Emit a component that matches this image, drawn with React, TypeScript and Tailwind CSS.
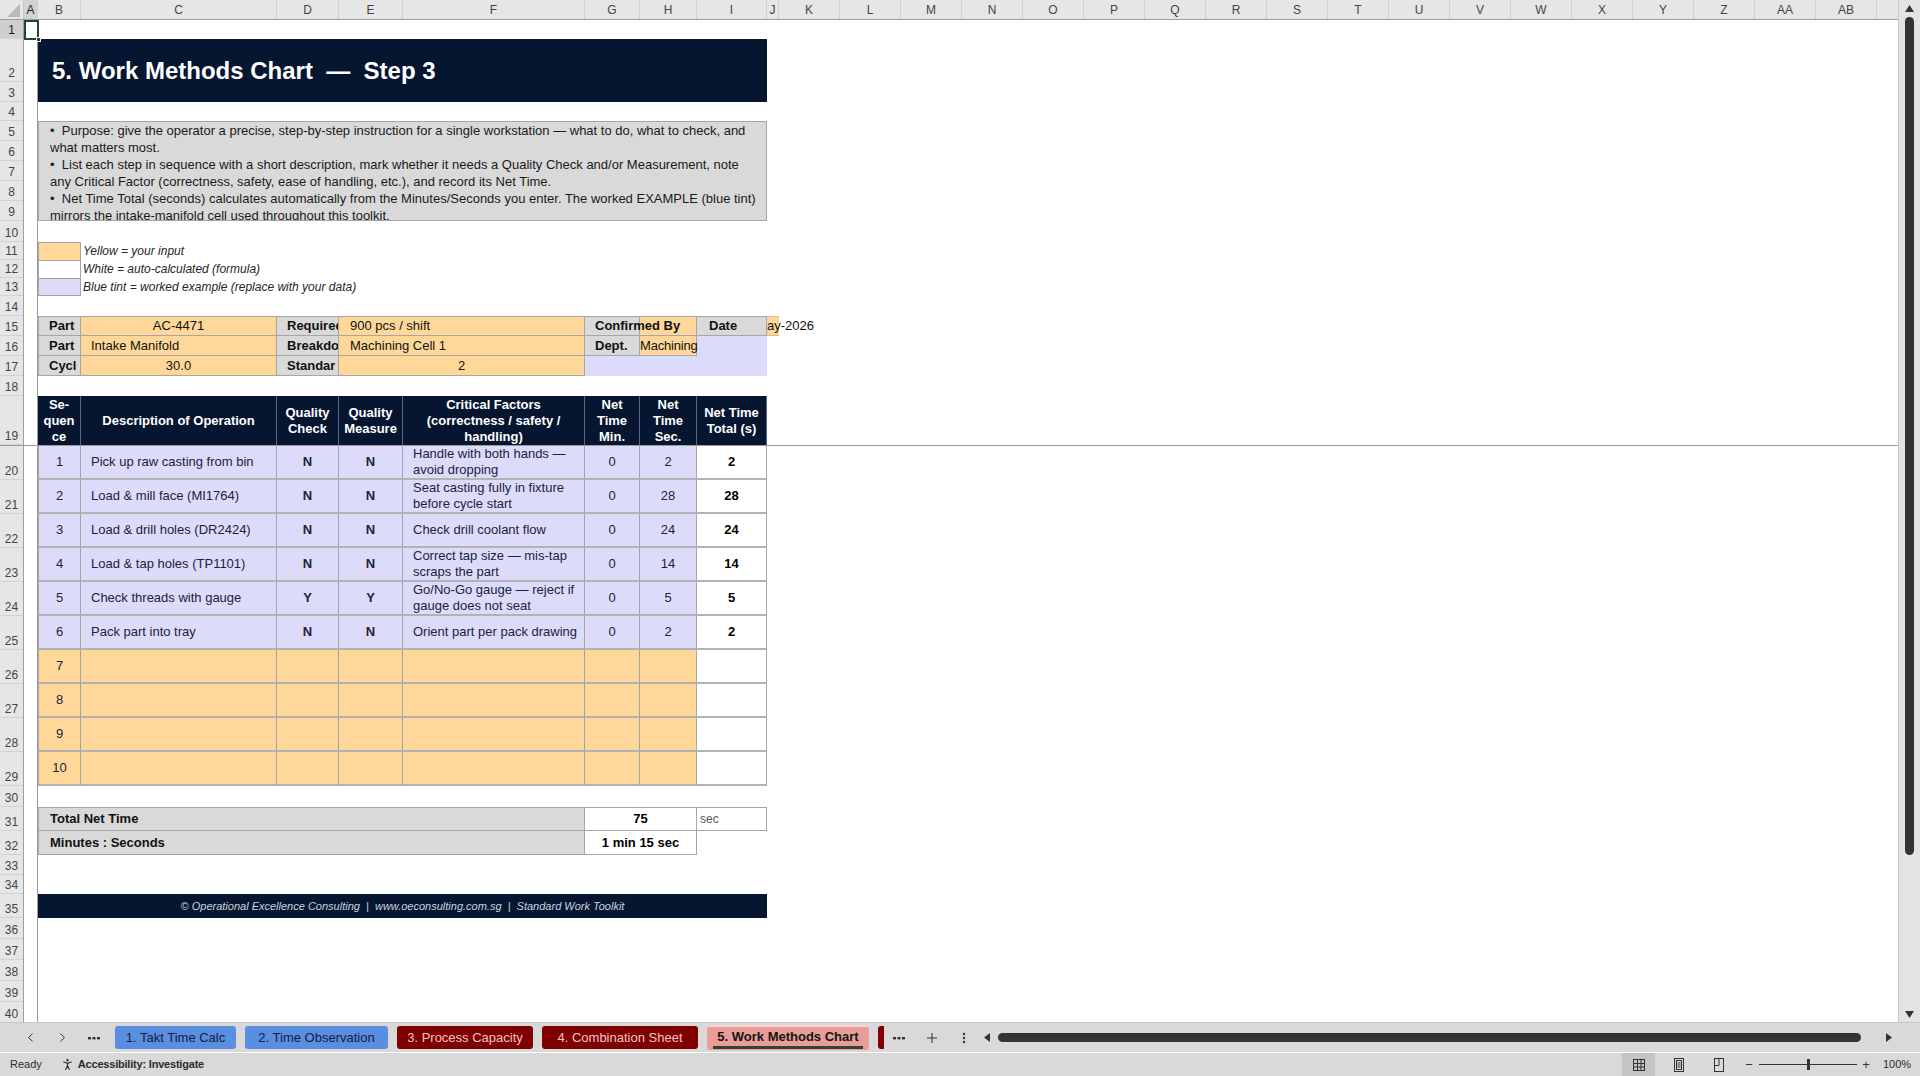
import { ChevronLeft, ChevronRight, Plus, PersonStanding } from "lucide-react";

type Step = {
  seq: number;
  desc: string;
  qc: string;
  qm: string;
  crit: string[];
  min: number;
  sec: number;
};

// worked example (blue tint rows)
const STEPS: Step[] = [
  { seq: 1, desc: "Pick up raw casting from bin", qc: "N", qm: "N", crit: ["Handle with both hands —", "avoid dropping"], min: 0, sec: 2 },
  { seq: 2, desc: "Load & mill face (MI1764)", qc: "N", qm: "N", crit: ["Seat casting fully in fixture", "before cycle start"], min: 0, sec: 28 },
  { seq: 3, desc: "Load & drill holes (DR2424)", qc: "N", qm: "N", crit: ["Check drill coolant flow"], min: 0, sec: 24 },
  { seq: 4, desc: "Load & tap holes (TP1101)", qc: "N", qm: "N", crit: ["Correct tap size — mis-tap", "scraps the part"], min: 0, sec: 14 },
  { seq: 5, desc: "Check threads with gauge", qc: "Y", qm: "Y", crit: ["Go/No-Go gauge — reject if", "gauge does not seat"], min: 0, sec: 5 },
  { seq: 6, desc: "Pack part into tray", qc: "N", qm: "N", crit: ["Orient part per pack drawing"], min: 0, sec: 2 },
];

const NOTES = [
  "•  Purpose: give the operator a precise, step-by-step instruction for a single workstation — what to do, what to check, and",
  "what matters most.",
  "•  List each step in sequence with a short description, mark whether it needs a Quality Check and/or Measurement, note",
  "any Critical Factor (correctness, safety, ease of handling, etc.), and record its Net Time.",
  "•  Net Time Total (seconds) calculates automatically from the Minutes/Seconds you enter. The worked EXAMPLE (blue tint)",
  "mirrors the intake-manifold cell used throughout this toolkit.",
];

const LEGEND = [
  { fill: "bg-[#ffd899]", text: "Yellow = your input", edge: "" },
  { fill: "bg-white", text: "White = auto-calculated (formula)", edge: "" },
  { fill: "bg-[#dcdcfa]", text: "Blue tint = worked example (replace with your data)", edge: "border-b" },
];

const COLUMNS = [
  { label: "A", w: "w-[14px]" },
  { label: "B", w: "w-[43px]" },
  { label: "C", w: "w-[196px]" },
  { label: "D", w: "w-[62px]" },
  { label: "E", w: "w-[64px]" },
  { label: "F", w: "w-[182px]" },
  { label: "G", w: "w-[55px]" },
  { label: "H", w: "w-[57px]" },
  { label: "I", w: "w-[70px]" },
  { label: "J", w: "w-[12px]" },
  ...["K", "L", "M", "N", "O", "P", "Q", "R", "S", "T", "U", "V", "W", "X", "Y", "Z", "AA", "AB"].map((label) => ({
    label,
    w: "w-[61px]",
  })),
];

type RowDef = { n: number; h: string };

const TOP_ROWS: RowDef[] = [
  { n: 1, h: "h-[19px]" },
  { n: 2, h: "h-[43px]" },
  { n: 3, h: "h-[20px]" },
  { n: 4, h: "h-[19px]" },
  { n: 5, h: "h-[20px]" },
  { n: 6, h: "h-[20px]" },
  { n: 7, h: "h-[20px]" },
  { n: 8, h: "h-[20px]" },
  { n: 9, h: "h-[20px]" },
  { n: 10, h: "h-[21px]" },
  { n: 11, h: "h-[18px]" },
  { n: 12, h: "h-[18px]" },
  { n: 13, h: "h-[18px]" },
  { n: 14, h: "h-[20px]" },
  { n: 15, h: "h-[20px]" },
  { n: 16, h: "h-[20px]" },
  { n: 17, h: "h-[20px]" },
  { n: 18, h: "h-[20px]" },
  { n: 19, h: "h-[49px]" },
];

const BOTTOM_ROWS: RowDef[] = [
  ...[20, 21, 22, 23, 24, 25, 26, 27, 28, 29].map((n) => ({ n, h: "h-[34px]" })),
  { n: 30, h: "h-[21px]" },
  { n: 31, h: "h-[24px]" },
  { n: 32, h: "h-[24px]" },
  { n: 33, h: "h-[20px]" },
  { n: 34, h: "h-[19px]" },
  { n: 35, h: "h-[24px]" },
  { n: 36, h: "h-[21px]" },
  { n: 37, h: "h-[21px]" },
  { n: 38, h: "h-[21px]" },
  { n: 39, h: "h-[21px]" },
  { n: 40, h: "h-[21px]" },
];

const HEADS = [
  { w: "w-[43px]", lines: ["Se-", "quen", "ce"] },
  { w: "w-[196px]", lines: ["Description of Operation"] },
  { w: "w-[62px]", lines: ["Quality", "Check"] },
  { w: "w-[64px]", lines: ["Quality", "Measure"] },
  { w: "w-[182px]", lines: ["Critical Factors", "(correctness / safety /", "handling)"] },
  { w: "w-[55px]", lines: ["Net", "Time", "Min."] },
  { w: "w-[57px]", lines: ["Net", "Time", "Sec."] },
  { w: "w-[70px]", lines: ["Net Time", "Total (s)"] },
];

function RowLabels({ rows }: { rows: RowDef[] }) {
  return (
    <div className="flex w-[24px] shrink-0 flex-col border-r border-[#9e9e9e] bg-[#e6e6e6]">
      {rows.map((r) => (
        <div
          key={r.n}
          className={`${r.h} flex shrink-0 items-end justify-center border-b border-[#d2d2d2] pb-px text-[12px] leading-[14px] ${
            r.n === 1 ? "bg-[#cfcfcf] text-[#1e1e1e]" : "text-[#444]"
          }`}
        >
          {r.n}
        </div>
      ))}
    </div>
  );
}

function Pane({ rows, selected, grow, children }: { rows: RowDef[]; selected?: boolean; grow?: boolean; children: React.ReactNode }) {
  return (
    <div className={`flex overflow-hidden ${grow ? "min-h-0 flex-1" : "shrink-0"}`}>
      <RowLabels rows={rows} />
      {/* frozen column A */}
      <div className="relative w-[14px] shrink-0 border-r border-[#9b9b9b]">
        {selected && (
          <div className="absolute left-0 top-0 h-[20px] w-[15px] border-2 border-[#1d4a2c]">
            <div className="absolute -bottom-[4px] -right-[4px] h-[5px] w-[5px] border border-white bg-[#1d4a2c]" />
          </div>
        )}
      </div>
      <div className="flex min-w-0 flex-1 flex-col">{children}</div>
    </div>
  );
}

function ColumnHeader() {
  return (
    <div className="flex h-[20px] shrink-0 border-b border-[#9e9e9e] bg-[#e6e6e6] text-[12px] text-[#444]">
      <div className="flex w-[24px] shrink-0 items-end justify-end border-r border-[#c8c8c8] pb-[2px] pr-[3px]">
        <svg width="13" height="13" viewBox="0 0 13 13">
          <polygon points="13,0 13,13 0,13" fill="#b9b9b9" />
        </svg>
      </div>
      {COLUMNS.map((c) => (
        <div
          key={c.label}
          className={`${c.w} flex shrink-0 items-center justify-center border-r border-[#d0d0d0] ${
            c.label === "A" ? "bg-[#d2d2d2] text-[#1e1e1e]" : ""
          }`}
        >
          {c.label}
        </div>
      ))}
      <div className="flex-1" />
    </div>
  );
}

function StepRow({ n, step }: { n: number; step?: Step }) {
  const fill = step ? "bg-[#dcdcfa]" : "bg-[#ffd899]";
  const cell = `flex shrink-0 items-center border-r border-b-2 border-r-[#a6a6a6] border-b-[#b3b3b3] ${fill}`;
  return (
    <div className="flex h-[34px] shrink-0 text-[13px] text-[#1a2240]">
      <div className={`${cell} w-[43px] justify-center border-l border-l-[#a6a6a6]`}>{n}</div>
      <div className={`${cell} w-[196px] whitespace-nowrap pl-[10px]`}>{step?.desc}</div>
      <div className={`${cell} w-[62px] justify-center font-bold`}>{step?.qc}</div>
      <div className={`${cell} w-[64px] justify-center font-bold`}>{step?.qm}</div>
      <div className={`${cell} w-[182px] pl-[10px]`}>
        <div className="whitespace-nowrap leading-[16px]">
          {step?.crit.map((line) => (
            <div key={line}>{line}</div>
          ))}
        </div>
      </div>
      <div className={`${cell} w-[55px] justify-center`}>{step?.min}</div>
      <div className={`${cell} w-[57px] justify-center`}>{step?.sec}</div>
      <div className="flex w-[70px] shrink-0 items-center justify-center border-r border-b-2 border-r-[#a6a6a6] border-b-[#b3b3b3] bg-white font-bold text-black">
        {step ? step.min * 60 + step.sec : ""}
      </div>
    </div>
  );
}

function Dots({ vertical }: { vertical?: boolean }) {
  return vertical ? (
    <svg width="4" height="12" viewBox="0 0 4 12" fill="#333">
      <circle cx="2" cy="2" r="1.2" />
      <circle cx="2" cy="6" r="1.2" />
      <circle cx="2" cy="10" r="1.2" />
    </svg>
  ) : (
    <svg width="12" height="4" viewBox="0 0 12 4" fill="#333">
      <rect x="0" y="1" width="3" height="2.4" />
      <rect x="4.5" y="1" width="3" height="2.4" />
      <rect x="9" y="1" width="3" height="2.4" />
    </svg>
  );
}

export default function App() {
  const total = STEPS.reduce((s, st) => s + st.min * 60 + st.sec, 0);
  const mmss = `${Math.floor(total / 60)} min ${total % 60} sec`;
  const rows = Array.from({ length: 10 }, (_, i) => i + 1);

  return (
    <div className="flex h-[1076px] w-[1920px] flex-col overflow-hidden bg-white font-['Liberation_Sans',Arial,sans-serif]">
      <div className="flex h-[1022px] shrink-0">
        <div className="flex w-[1898px] shrink-0 flex-col overflow-hidden">
          <ColumnHeader />

          {/* rows 1-19 (frozen) */}
          <Pane rows={TOP_ROWS} selected>
            <div className="h-[19px] shrink-0" />
            <div className="flex h-[63px] w-[729px] shrink-0 items-center whitespace-pre bg-[#061631] pl-[14px] text-[24px] font-bold text-white">
              5. Work Methods Chart  —  Step 3
            </div>
            <div className="h-[19px] shrink-0" />
            <div className="h-[100px] w-[729px] shrink-0 overflow-hidden whitespace-pre border border-[#a6a6a6] bg-[#d9d9d9] pl-[11px] text-[13px] leading-[17px] text-[#1a1a1a]">
              {NOTES.map((line) => (
                <div key={line}>{line}</div>
              ))}
            </div>
            <div className="h-[21px] shrink-0" />

            {LEGEND.map((item) => (
              <div key={item.text} className="flex h-[18px] shrink-0 items-center">
                <div className={`h-full w-[43px] border-x border-t border-[#a6a6a6] ${item.fill} ${item.edge}`} />
                <span className="pl-[2px] text-[12px] italic text-[#262626]">{item.text}</span>
              </div>
            ))}
            <div className="h-[20px] shrink-0" />

            {/* part / requirement block */}
            <div className="flex h-[20px] shrink-0 text-[13px] text-[#111]">
              <div className="flex w-[43px] shrink-0 items-center border border-[#a6a6a6] bg-[#d9d9d9] pl-[10px] font-bold">Part</div>
              <div className="flex w-[196px] shrink-0 items-center justify-center border-y border-r border-[#a6a6a6] bg-[#ffd899]">AC-4471</div>
              <div className="flex w-[62px] shrink-0 items-center overflow-hidden whitespace-nowrap border-y border-r border-[#a6a6a6] bg-[#d9d9d9] pl-[10px] font-bold">Required</div>
              <div className="flex w-[246px] shrink-0 items-center border-y border-r border-[#a6a6a6] bg-[#ffd899] pl-[11px]">900 pcs / shift</div>
              <div className="flex w-[55px] shrink-0 items-center whitespace-nowrap border-y border-r border-[#a6a6a6] bg-[#d9d9d9] pl-[10px] font-bold">
                <span className="relative z-10">Confirmed By</span>
              </div>
              <div className="w-[57px] shrink-0 border-y border-r border-[#a6a6a6] bg-[#ffd899]" />
              <div className="flex w-[70px] shrink-0 items-center border-y border-r border-[#a6a6a6] bg-[#d9d9d9] pl-[12px] font-bold">Date</div>
              <div className="flex w-[12px] shrink-0 items-center whitespace-nowrap border-y border-[#d8c08a] bg-[#ffd899]">
                <span className="relative z-10">ay-2026</span>
              </div>
            </div>
            <div className="flex h-[20px] shrink-0 text-[13px] text-[#111]">
              <div className="flex w-[43px] shrink-0 items-center border-x border-b border-[#a6a6a6] bg-[#d9d9d9] pl-[10px] font-bold">Part</div>
              <div className="flex w-[196px] shrink-0 items-center border-r border-b border-[#a6a6a6] bg-[#ffd899] pl-[10px]">Intake Manifold</div>
              <div className="flex w-[62px] shrink-0 items-center overflow-hidden whitespace-nowrap border-r border-b border-[#a6a6a6] bg-[#d9d9d9] pl-[10px] font-bold">Breakdo</div>
              <div className="flex w-[246px] shrink-0 items-center border-r border-b border-[#a6a6a6] bg-[#ffd899] pl-[11px]">Machining Cell 1</div>
              <div className="flex w-[55px] shrink-0 items-center border-r border-b border-[#a6a6a6] bg-[#d9d9d9] pl-[10px] font-bold">Dept.</div>
              <div className="flex w-[57px] shrink-0 items-center whitespace-nowrap border-r border-b border-[#a6a6a6] bg-[#ffd899]">
                <span className="relative z-10 tracking-[-0.2px]">Machining</span>
              </div>
              <div className="w-[70px] shrink-0 bg-[#dcdcfa]" />
            </div>
            <div className="flex h-[20px] shrink-0 text-[13px] text-[#111]">
              <div className="flex w-[43px] shrink-0 items-center overflow-hidden whitespace-nowrap border-x border-b border-[#a6a6a6] bg-[#d9d9d9] pl-[10px] font-bold">Cycl</div>
              <div className="flex w-[196px] shrink-0 items-center justify-center border-r border-b border-[#a6a6a6] bg-[#ffd899]">30.0</div>
              <div className="flex w-[62px] shrink-0 items-center overflow-hidden whitespace-nowrap border-r border-b border-[#a6a6a6] bg-[#d9d9d9] pl-[10px] font-bold">Standar</div>
              <div className="flex w-[246px] shrink-0 items-center justify-center border-r border-b border-[#a6a6a6] bg-[#ffd899]">2</div>
              <div className="w-[182px] shrink-0 bg-[#dcdcfa]" />
            </div>
            <div className="h-[20px] shrink-0" />

            {/* table header */}
            <div className="flex h-[49px] w-[729px] shrink-0 bg-[#061631] text-[13px] font-bold leading-[16px] text-white">
              {HEADS.map((h, i) => (
                <div
                  key={i}
                  className={`${h.w} flex shrink-0 flex-col items-center justify-center overflow-hidden border-r border-[#5d6678] text-center`}
                >
                  {h.lines.map((line, j) => (
                    <span key={j} className="whitespace-nowrap">
                      {line}
                    </span>
                  ))}
                </div>
              ))}
            </div>
          </Pane>

          {/* freeze line */}
          <div className="h-px shrink-0 bg-[#9b9b9b]" />

          {/* rows 20-40 */}
          <Pane rows={BOTTOM_ROWS} grow>
            {rows.map((n) => (
              <StepRow key={n} n={n} step={STEPS[n - 1]} />
            ))}
            <div className="h-[21px] shrink-0" />

            <div className="flex h-[24px] shrink-0 text-[13px] text-[#111]">
              <div className="flex w-[547px] shrink-0 items-center border border-[#a6a6a6] bg-[#d9d9d9] pl-[11px] font-bold">Total Net Time</div>
              <div className="flex w-[112px] shrink-0 items-center justify-center border-y border-r border-[#a6a6a6] bg-white font-bold text-black">{total}</div>
              <div className="flex w-[70px] shrink-0 items-center border-y border-r border-[#a6a6a6] bg-white pl-[3px] text-[12px] text-[#595959]">sec</div>
            </div>
            <div className="flex h-[24px] shrink-0 text-[13px] text-[#111]">
              <div className="flex w-[547px] shrink-0 items-center border-x border-b border-[#a6a6a6] bg-[#d9d9d9] pl-[11px] font-bold">Minutes : Seconds</div>
              <div className="flex w-[112px] shrink-0 items-center justify-center border-r border-b border-[#a6a6a6] bg-white font-bold text-black">{mmss}</div>
            </div>
            <div className="h-[39px] shrink-0" />

            <div className="flex h-[24px] w-[729px] shrink-0 items-center justify-center whitespace-pre bg-[#061631] text-[11px] italic text-[#cdd3dd]">
              © Operational Excellence Consulting  |  www.oeconsulting.com.sg  |  Standard Work Toolkit
            </div>
          </Pane>
        </div>

        {/* vertical scrollbar */}
        <div className="flex w-[22px] shrink-0 flex-col items-center border-l border-[#c8c8c8] bg-[#e3e3e3] pb-[4px] pt-[5px]">
          <svg width="9" height="7" viewBox="0 0 9 7">
            <polygon points="4.5,0 9,7 0,7" fill="#333" />
          </svg>
          <div className="mt-[5px] h-[838px] w-[9px] rounded-full bg-[#333]" />
          <div className="flex-1" />
          <svg width="9" height="7" viewBox="0 0 9 7">
            <polygon points="0,0 9,0 4.5,7" fill="#333" />
          </svg>
        </div>
      </div>

      {/* sheet tabs */}
      <div className="flex h-[30px] shrink-0 items-center border-t border-[#c6c6c6] bg-[#d9d9d9] text-[13px]">
        <div className="ml-[14px] flex w-[32px] justify-center text-[#333]">
          <ChevronLeft size={15} strokeWidth={1.6} />
        </div>
        <div className="flex w-[32px] justify-center text-[#333]">
          <ChevronRight size={15} strokeWidth={1.6} />
        </div>
        <div className="flex w-[32px] justify-center">
          <Dots />
        </div>
        <div className="ml-[5px] flex items-center gap-[9px]">
          <div className="flex h-[23px] w-[121px] items-center justify-center rounded-[3px] bg-[#5a8ee0] text-[#10203f]">1. Takt Time Calc</div>
          <div className="flex h-[23px] w-[143px] items-center justify-center rounded-[3px] bg-[#5a8ee0] text-[#10203f]">2. Time Observation</div>
          <div className="flex h-[23px] w-[136px] items-center justify-center rounded-[3px] bg-[#7f0000] text-[#f3c4c4]">3. Process Capacity</div>
          <div className="flex h-[23px] w-[156px] items-center justify-center rounded-[3px] bg-[#7f0000] text-[#f3c4c4]">4. Combination Sheet</div>
          <div className="flex h-[25px] w-[162px] flex-col items-center justify-center rounded-[3px] border-t-2 border-[#f7d3d1] bg-[#e99c98] font-bold text-[#141414]">
            <span className="leading-[15px]">5. Work Methods Chart</span>
            <div className="mt-[2px] h-[3px] w-[150px] bg-[#2f4630]" />
          </div>
          <div className="h-[23px] w-[6px] rounded-l-[3px] bg-[#7f0000]" />
        </div>
        <div className="ml-[5px] flex w-[20px] justify-center">
          <Dots />
        </div>
        <div className="ml-[13px] flex w-[20px] justify-center text-[#333]">
          <Plus size={16} strokeWidth={1.5} />
        </div>
        <div className="ml-[12px] flex w-[20px] justify-center">
          <Dots vertical />
        </div>
        <div className="ml-[8px] flex w-[10px] justify-center">
          <svg width="6" height="9" viewBox="0 0 6 9">
            <polygon points="6,0 6,9 0,4.5" fill="#333" />
          </svg>
        </div>
        <div className="ml-[6px] h-[9px] w-[863px] rounded-full bg-[#333]" />
        <div className="ml-[23px] flex w-[10px] justify-center">
          <svg width="6" height="9" viewBox="0 0 6 9">
            <polygon points="0,0 6,4.5 0,9" fill="#333" />
          </svg>
        </div>
      </div>

      {/* status bar */}
      <div className="flex h-[24px] shrink-0 items-center border-t border-white bg-[#d9d9d9] text-[11px] text-[#2b2b2b]">
        <span className="ml-[10px]">Ready</span>
        <PersonStanding className="ml-[18px]" size={15} strokeWidth={1.8} />
        <span className="ml-[3px] font-bold tracking-[-0.2px]">Accessibility: Investigate</span>
        <div className="flex-1" />
        <div className="flex h-full w-[298px] items-center">
          <div className="flex h-full w-[33px] items-center justify-center bg-[#c4c4c4]">
            <svg width="14" height="14" viewBox="0 0 14 14" fill="none" stroke="#333" strokeWidth="1">
              <rect x="1.5" y="1.5" width="11" height="11" />
              <path d="M5.5 1.5v11M9 1.5v11M1.5 5.5h11M1.5 9h11" />
            </svg>
          </div>
          <div className="flex w-[48px] justify-center">
            <svg width="12" height="14" viewBox="0 0 12 14" fill="none" stroke="#333" strokeWidth="1">
              <rect x="1.5" y="0.5" width="9" height="13" />
              <rect x="3.5" y="2.5" width="5" height="9" />
              <path d="M4.5 5h3M4.5 7h3M4.5 9h3" />
            </svg>
          </div>
          <div className="flex w-[32px] justify-center">
            <svg width="12" height="14" viewBox="0 0 12 14" fill="none" stroke="#333" strokeWidth="1">
              <rect x="1.5" y="0.5" width="9" height="13" />
              <path d="M6 0.5v7M1.5 7.5h4.5" />
            </svg>
          </div>
          <div className="ml-[4px] flex w-[20px] justify-center text-[13px] text-[#333]">−</div>
          <div className="relative flex h-full w-[98px] items-center">
            <div className="h-px w-full bg-[#333]" />
            <div className="absolute left-[48px] top-[6px] h-[11px] w-[3px] bg-[#333]" />
          </div>
          <div className="flex w-[18px] justify-center text-[13px] text-[#333]">+</div>
          <div className="flex w-[44px] justify-center">100%</div>
        </div>
      </div>
    </div>
  );
}
